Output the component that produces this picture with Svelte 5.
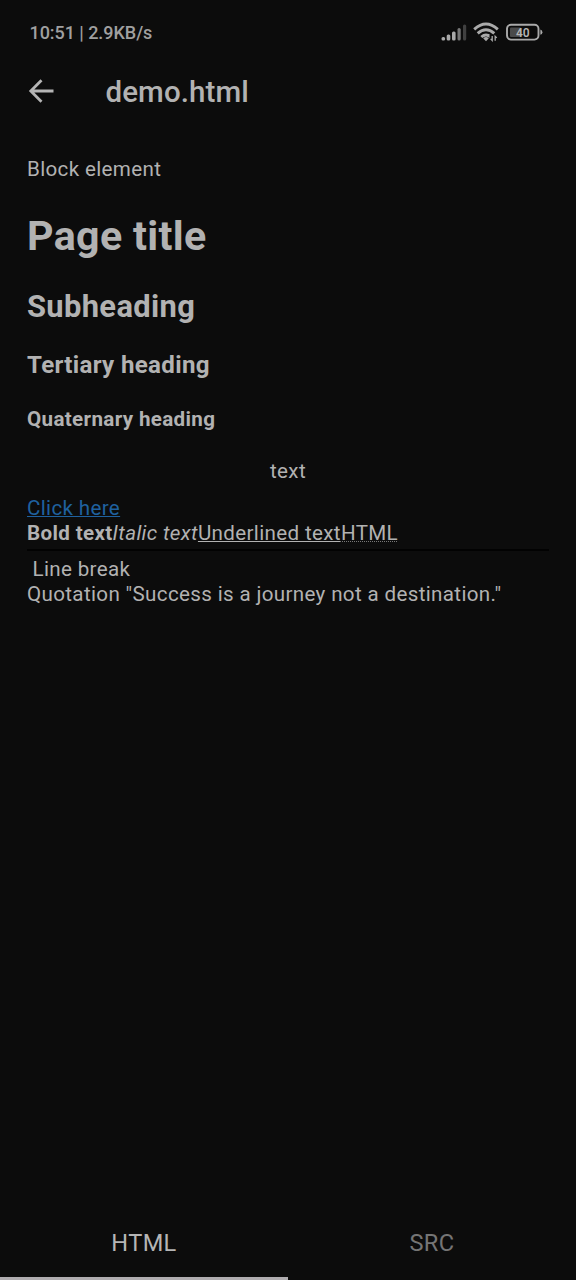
<script>
  let tab = $state('HTML');
</script>

<div class="screen">
  <div class="status">
    <span class="clock">10:51 | 2.9KB/s</span>
    <div class="indicators">
      <svg class="signal" width="26" height="18" viewBox="0 0 26 18">
        <g fill="#aaa"><rect x="0.5" y="14" width="3.6" height="3.5" rx="1.5"/><rect x="5.7" y="11.5" width="3.6" height="6" rx="1.5"/><rect x="11" y="8.5" width="3.6" height="9" rx="1.5"/></g>
        <rect x="16.5" y="5" width="3.2" height="12.5" rx="1.5" fill="#777"/>
        <rect x="22" y="1.5" width="3.2" height="16" rx="1.5" fill="#404040"/>
      </svg>
      <svg class="wifi" width="26" height="20" viewBox="0 0 26 20">
        <g fill="none" stroke="#aaa" stroke-width="2.9"><path d="M1.2 7.4Q13-3.3 24.8 7.4"/><path d="M4.7 11.4Q13 4 21.3 11.4"/><path d="M8.3 15Q13 11 17.7 15"/></g>
        <path d="M10.2 16.2Q13 14 15.8 16.2L13 19.2Z" fill="#aaa"/>
        <path d="M16.5 13h8v6h-8z" fill="#0c0c0c"/>
        <path d="M19.2 14v4.5l-1.6-1.6M22.2 18.8v-4.5l1.6 1.6" fill="none" stroke="#aaa" stroke-width="1.3"/>
      </svg>
      <svg class="battery" width="38" height="18" viewBox="0 0 38 18">
        <rect x="2" y="1.8" width="31.5" height="14.8" rx="4" fill="none" stroke="#aaa" stroke-width="1.9"/>
        <rect x="5" y="4.5" width="11" height="9.5" rx="1" fill="#4a4a4a"/>
        <path d="M35.4 6.6v5.2q2-.6 2-2.6t-2-2.6" fill="#aaa"/>
        <text x="17.8" y="13.6" text-anchor="middle">40</text>
      </svg>
    </div>
  </div>
  <header>
    <svg width="26" height="26" viewBox="0 0 26 26"><path d="M25.5 13H3.2M13.5 2.2L2.8 13l10.7 10.8" fill="none" stroke="#b5b5b5" stroke-width="2.8"/></svg>
    <span>demo.html</span>
  </header>
  <main>
    <p class="block">Block element</p>
    <h1>Page title</h1>
    <h2>Subheading</h2>
    <h3>Tertiary heading</h3>
    <h4>Quaternary heading</h4>
    <center>text</center>
    <div class="line"><a href="#link">Click here</a></div>
    <div class="line inline"><b>Bold text</b><i>Italic text</i><u>Underlined text</u><abbr>HTML</abbr></div>
    <hr />
    <div class="line break">Line break</div>
    <div class="line">Quotation "Success is a journey not a destination."</div>
  </main>
  <nav>
    {#each ['HTML', 'SRC'] as name}
      <button class:active={tab === name} onclick={() => (tab = name)}>{name}</button>
    {/each}
  </nav>
</div>

<style>
  :global(body) { background: #0c0c0c; }
  .screen { height: 1280px; width: 576px; box-sizing: border-box; display: flex; flex-direction: column; background: #0c0c0c; color: #b2b2b2; font-family: Roboto, sans-serif; overflow: hidden; }
  .status { height: 64px; flex: none; display: flex; align-items: center; justify-content: space-between; padding: 0 33px 0 29.5px; box-sizing: border-box; }
  .clock { font-size: 18px; font-weight: 500; color: #a0a0a0; letter-spacing: -.05px; }
  .indicators { display: flex; align-items: center; gap: 6px; }
  text { font-size: 12px; font-weight: 600; fill: #b5b5b5; }
  header { height: 54px; flex: none; display: flex; align-items: center; padding: 0 28px; font-size: 29.5px; font-weight: 500; letter-spacing: .1px; gap: 51.5px; }
  header span { padding-top: 2px; }
  main { flex: 1; padding: 0 27px; font-size: 20.6px; line-height: 25px; letter-spacing: .34px; }
  p, h1, h2, h3, h4 { margin: 0; }
  .block { margin-top: 39px; }
  h1 { font-size: 41.2px; line-height: 50px; margin-top: 29px; }
  h2 { font-size: 30.9px; line-height: 38px; margin-top: 27px; }
  h3 { font-size: 24.1px; line-height: 30px; margin-top: 24px; }
  h4 { font-size: 20.6px; line-height: 25px; margin-top: 27px; }
  center { margin: 27px 0 12px; }
  a, u, abbr { text-decoration-thickness: 1px; text-underline-offset: 1px; }
  a { color: #1f619f; }
  abbr { text-decoration: underline dotted 1px #777; }
  hr { border: 0; height: 2px; background: #020202; margin: 3px 0 6px; }
  .break { padding-left: 5.5px; }
  nav { height: 74px; flex: none; display: grid; grid-template-columns: 1fr 1fr; }
  button { background: none; border: 0; border-bottom: 3px solid transparent; padding: 2px 0 0; font: 400 23.6px Roboto, sans-serif; letter-spacing: .35px; color: #757575; }
  button.active { color: #b5b5b5; border-color: #b0adb0; }
</style>
